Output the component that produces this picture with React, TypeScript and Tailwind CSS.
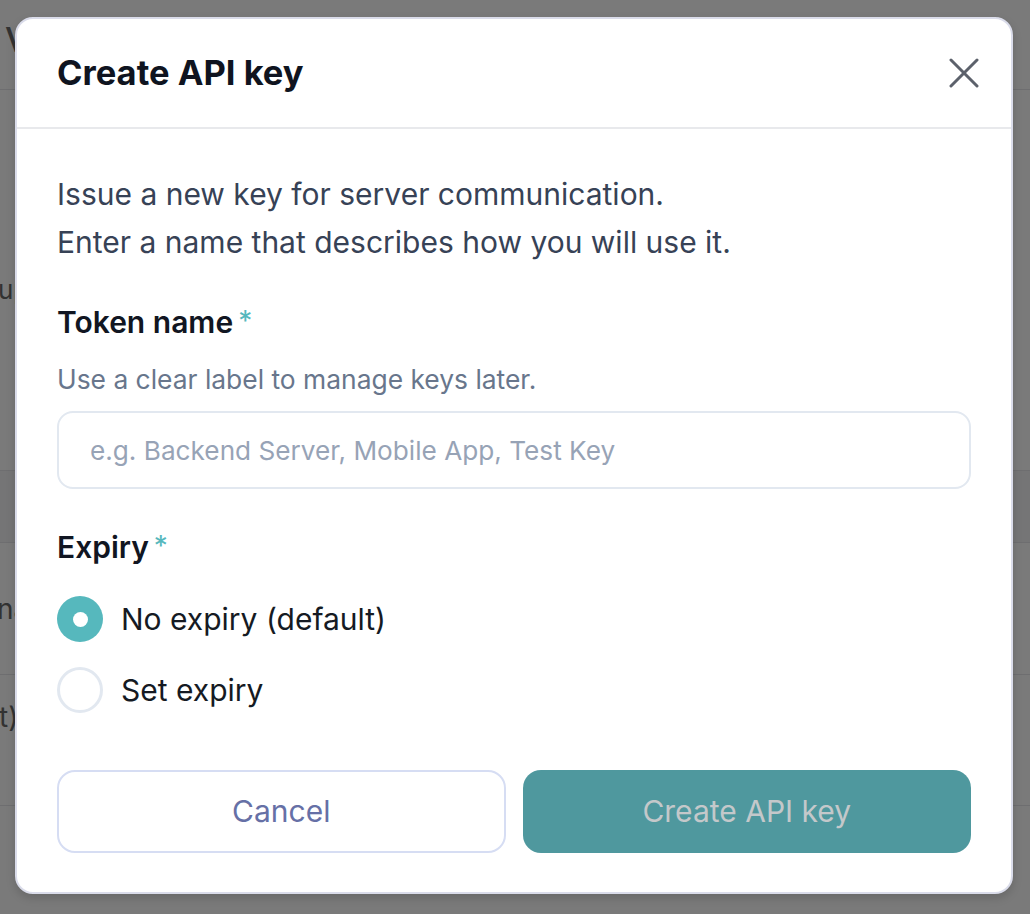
import React from "react";

function CloseIcon() {
  return (
    <svg width="30" height="30" viewBox="0 0 30 30" fill="none" stroke="#5c616b" strokeWidth="3" strokeLinecap="round">
      <line x1="2" y1="2" x2="28" y2="28" />
      <line x1="28" y1="2" x2="2" y2="28" />
    </svg>
  );
}

function Radio({ checked, label }: { checked: boolean; label: string }) {
  return (
    <label className="flex items-center h-[46px] gap-[18px] cursor-pointer">
      {checked ? (
        <span className="w-[46px] h-[46px] rounded-full bg-[#56b8bd] flex items-center justify-center">
          <span className="w-[15px] h-[15px] rounded-full bg-white" />
        </span>
      ) : (
        <span className="w-[46px] h-[46px] rounded-full border-[3px] border-[#e2e8f0] bg-white" />
      )}
      <span className="text-[30px] leading-[40px] text-[#151a23]">{label}</span>
    </label>
  );
}

export default function App() {
  return (
    <div
      className="relative w-[1030px] h-[914px] overflow-hidden bg-white"
      style={{ fontFamily: "Inter, 'Noto Sans', sans-serif" }}
    >
      {/* underlying page */}
      <div className="flex flex-col text-[#6a6a6a]">
        <div className="h-[90px] border-b border-[#e5e7eb] flex items-start pt-[20px] pl-[5px]">
          <span className="text-[34px] leading-[40px] font-medium">Vault</span>
        </div>
        <div className="h-[380px] flex flex-col pt-[180px]">
          <span className="text-[26px] -ml-[2px]">uptime</span>
        </div>
        <div className="h-[73px] border-y border-[#e5e7eb] bg-[#f4f4f6]" />
        <div className="h-[132px] border-b border-[#e5e7eb] flex items-center">
          <span className="text-[28px] -ml-[3px]">name</span>
        </div>
        <div className="h-[131px] border-b border-[#e5e7eb] flex items-start pt-[22px]">
          <span className="text-[28px] leading-[40px] -ml-[1px]">t)</span>
        </div>
      </div>

      {/* overlay */}
      <div className="absolute inset-0 bg-[rgba(0,0,0,0.52)]" />

      {/* modal */}
      <div className="absolute left-[15px] top-[17px] w-[998px] bg-white border-2 border-[#dadcea] rounded-[18px] shadow-[0_4px_10px_rgba(0,0,0,0.15)] flex flex-col">
        <div className="h-[110px] flex items-center justify-between pl-[40px] pr-[32px] border-b-2 border-[#e8e9ec]">
          <h2 className="text-[34.5px] font-bold text-[#0f1420]">Create API key</h2>
          <button className="w-[30px] h-[30px] flex items-center justify-center">
            <CloseIcon />
          </button>
        </div>

        <div className="flex flex-col px-[40px] pt-[41px] pb-[39px]">
          <p className="text-[30px] leading-[48px] text-[#374256]">
            Issue a new key for server communication.
            <br />
            Enter a name that describes how you will use it.
          </p>

          <div className="mt-[36px] flex items-start leading-[40px]">
            <span className="text-[30px] font-semibold text-[#111622]">Token name</span>
            <span className="ml-[5px] mt-[4px] text-[28px] leading-[30px] text-[#56b8bd]">*</span>
          </div>
          <p className="mt-[21px] text-[26.4px] leading-[32px] text-[#68768c]">
            Use a clear label to manage keys later.
          </p>
          <input
            className="mt-[16px] h-[78px] w-full rounded-[16px] border-2 border-[#e2e8f0] px-[31px] text-[26.2px] text-[#1e293b] placeholder:text-[#97a3b6] outline-none"
            placeholder="e.g. Backend Server, Mobile App, Test Key"
          />

          <div className="mt-[38px] flex items-start leading-[40px]">
            <span className="text-[30px] font-semibold text-[#111622]">Expiry</span>
            <span className="ml-[5px] mt-[4px] text-[28px] leading-[30px] text-[#56b8bd]">*</span>
          </div>

          <div className="mt-[29px] flex flex-col gap-[25px]">
            <Radio checked label="No expiry (default)" />
            <Radio checked={false} label="Set expiry" />
          </div>

          <div className="mt-[57px] grid grid-cols-2 gap-[17px]">
            <button className="h-[83px] rounded-[18px] border-2 border-[#d6ddf3] bg-white text-[30px] text-[#6670a6]">
              Cancel
            </button>
            <button className="h-[83px] rounded-[18px] bg-[#4f989e] text-[30px] text-[#c4c8ca]">
              Create API key
            </button>
          </div>
        </div>
      </div>
    </div>
  );
}
